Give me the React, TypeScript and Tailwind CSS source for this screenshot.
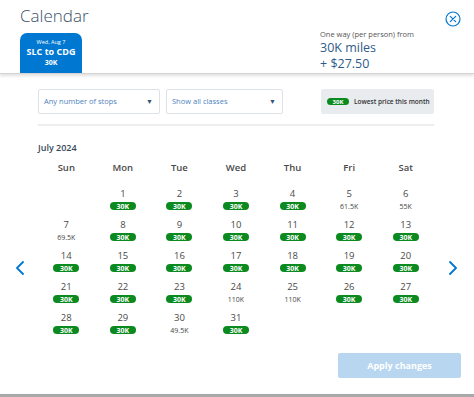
import React from 'react';

const days: { d: number; p: string }[] = [
    { d: 1, p: '30K' }, { d: 2, p: '30K' }, { d: 3, p: '30K' }, { d: 4, p: '30K' }, { d: 5, p: '61.5K' }, { d: 6, p: '55K' },
    { d: 7, p: '69.5K' }, { d: 8, p: '30K' }, { d: 9, p: '30K' }, { d: 10, p: '30K' }, { d: 11, p: '30K' }, { d: 12, p: '30K' }, { d: 13, p: '30K' },
    { d: 14, p: '30K' }, { d: 15, p: '30K' }, { d: 16, p: '30K' }, { d: 17, p: '30K' }, { d: 18, p: '30K' }, { d: 19, p: '30K' }, { d: 20, p: '30K' },
    { d: 21, p: '30K' }, { d: 22, p: '30K' }, { d: 23, p: '30K' }, { d: 24, p: '110K' }, { d: 25, p: '110K' }, { d: 26, p: '30K' }, { d: 27, p: '30K' },
    { d: 28, p: '30K' }, { d: 29, p: '30K' }, { d: 30, p: '49.5K' }, { d: 31, p: '30K' },
];

const weekdays = ['Sun', 'Mon', 'Tue', 'Wed', 'Thu', 'Fri', 'Sat'];

const Pill: React.FC<{ children: React.ReactNode }> = ({ children }) => (
    <span className="inline-flex items-center justify-center w-[26px] h-[8px] rounded-full bg-[#0b8a1f] text-white text-[7px] font-bold leading-none">
        {children}
    </span>
);

const Select: React.FC<{ label: string; width: string }> = ({ label, width }) => (
    <div className={`${width} h-[25px] border border-[#dde2e6] rounded-[2px] flex items-center justify-between pl-[5px] pr-[6px]`}>
        <span className="text-[7.5px] text-[#4f83bd]">{label}</span>
        <span className="text-[7px] text-[#36557a] leading-none">▼</span>
    </div>
);

const Chevron: React.FC<{ dir: 'left' | 'right' }> = ({ dir }) => (
    <svg width="8" height="14" viewBox="0 0 8 14" fill="none" stroke="#0078d2" strokeWidth="1.8" strokeLinecap="round" strokeLinejoin="round">
        {dir === 'left' ? <path d="M7 1 L1 7 L7 13" /> : <path d="M1 1 L7 7 L1 13" />}
    </svg>
);

export default function App() {
    const cells: ({ d: number; p: string } | null)[] = [null, ...days];

    return (
        <div className="w-[474px] h-[397px] bg-white flex flex-col overflow-hidden" style={{ fontFamily: '"Open Sans", "Liberation Sans", sans-serif' }}>
            {/* header */}
            <div className="h-[74px] flex shrink-0 border-b border-[#d4d4d4] shadow-[0_2px_3px_rgba(0,0,0,0.12)]">
                <div className="w-[320px] pl-[20px] flex flex-col">
                    <h1 className="pt-[5px] text-[17px] leading-[22px] text-[#3a5068] font-light">Calendar</h1>
                    <div className="mt-auto w-[62px] h-[40px] rounded-t-[7px] bg-[#0078d2] text-white flex flex-col items-center pt-[6px]">
                        <span className="text-[5.5px] leading-[7px]">Wed, Aug 7</span>
                        <span className="text-[9px] leading-[12px] font-bold">SLC to CDG</span>
                        <span className="text-[7px] leading-[9px] font-bold">30K</span>
                    </div>
                </div>
                <div className="flex-1 pt-[28px]">
                    <p className="text-[7.5px] leading-[12px] text-[#555]">One way (per person) from</p>
                    <p className="text-[12.5px] leading-[16px] text-[#2f5b8a]">30K miles</p>
                    <p className="text-[12.5px] leading-[16px] text-[#2f5b8a]">+ $27.50</p>
                </div>
                <div className="w-[16px] mr-[13px] mt-[11px]">
                    <svg width="16" height="16" viewBox="0 0 16 16" fill="none" stroke="#0078d2" strokeWidth="1.2" strokeLinecap="round">
                        <circle cx="8" cy="8" r="7" />
                        <path d="M5.3 5.3 L10.7 10.7 M10.7 5.3 L5.3 10.7" />
                    </svg>
                </div>
            </div>

            {/* body */}
            <div className="flex flex-1">
                <div className="w-[38px] flex justify-center pt-[187px] pl-[1px]">
                    <div><Chevron dir="left" /></div>
                </div>
                <div className="w-[396px] pt-[15px]">
                    <div className="flex items-center gap-[6px]">
                        <Select label="Any number of stops" width="w-[122px]" />
                        <Select label="Show all classes" width="w-[117px]" />
                        <div className="ml-auto w-[113px] h-[25px] bg-[#e8ecef] rounded-[2px] flex items-center gap-[5px] pl-[6px]">
                            <span className="inline-flex items-center justify-center w-[22px] h-[7px] rounded-full bg-[#0b8a1f] text-white text-[6px] font-bold leading-none">30K</span>
                            <span className="text-[6.5px] text-[#333] font-semibold">Lowest price this month</span>
                        </div>
                    </div>
                    <div className="mt-[10px] h-[2px] bg-[#eceeef]" />
                    <p className="mt-[16px] text-[9px] leading-[12px] font-semibold text-[#36495a]">July 2024</p>
                    <div className="mt-[7px] grid grid-cols-7">
                        {weekdays.map((w) => (
                            <span key={w} className="text-center text-[9.5px] leading-[14px] text-[#4a4a4a] font-semibold">{w}</span>
                        ))}
                    </div>
                    <div className="mt-[12px] grid grid-cols-7 gap-y-[8px]">
                        {cells.map((c, i) => (
                            <div key={i} className="flex flex-col items-center h-[23px]">
                                {c && (
                                    <>
                                        <span className="text-[9.5px] leading-[14px] text-[#4a4a4a]">{c.d}</span>
                                        <div className="mt-[1px] h-[8px] flex items-center">
                                            {c.p === '30K' ? <Pill>30K</Pill> : <span className="text-[7px] leading-none text-[#444]">{c.p}</span>}
                                        </div>
                                    </>
                                )}
                            </div>
                        ))}
                    </div>
                </div>
                <div className="w-[40px] flex justify-center pt-[187px] pr-[2px]">
                    <div><Chevron dir="right" /></div>
                </div>
            </div>

            {/* footer */}
            <div className="flex justify-end pr-[13px] pb-[16px]">
                <button className="w-[123px] h-[25px] rounded-[2px] bg-[#b9d6f0] text-white text-[9px] font-bold">Apply changes</button>
            </div>
            <div className="h-[3px] bg-[#a9a9a9] shrink-0" />
        </div>
    );
}
